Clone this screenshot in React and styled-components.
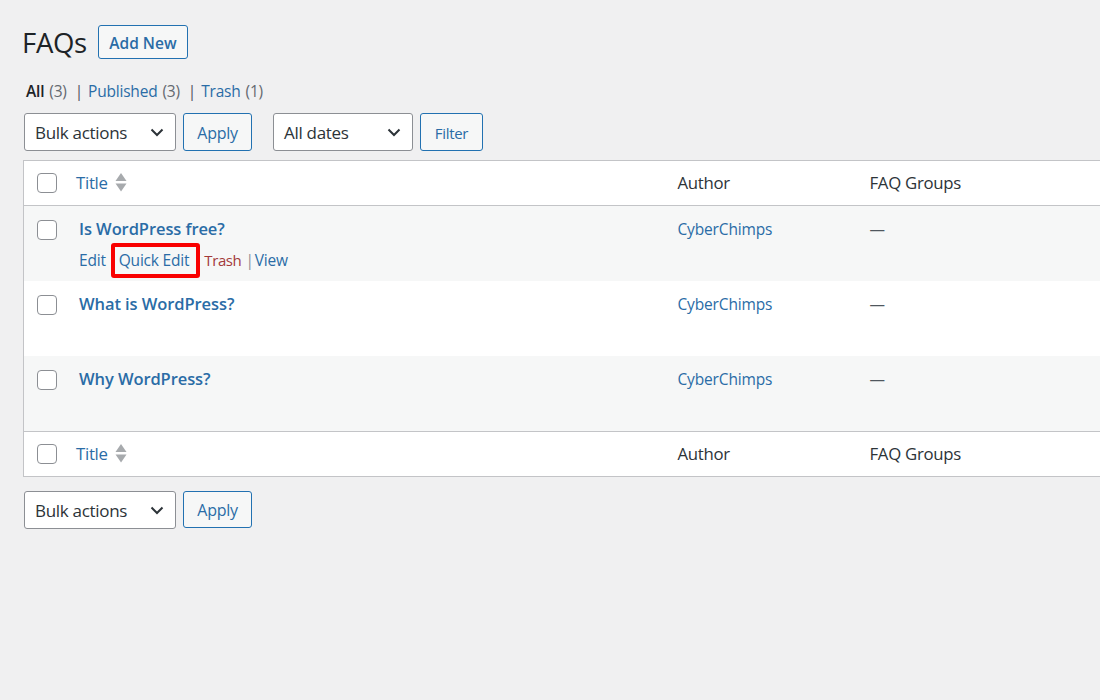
import React from "react";
import styled, { createGlobalStyle } from "styled-components";

const Global = createGlobalStyle`
  html, body { margin: 0; padding: 0; background: #f0f0f1; overflow: hidden; }
  body { width: 1100px; height: 700px; font-family: "Open Sans", "Noto Sans", sans-serif; color: #1d2327; }
  * { box-sizing: border-box; }
`;
const LINK = "#2a6ca6";
const Page = styled.div`
  width: 1100px; height: 700px; padding: 25px 0 0 23px; overflow: hidden;
`;
const Heading = styled.div`
  display: flex; align-items: center; gap: 11px; height: 34px;
`;
const Title = styled.h1`
  margin: 0 0 0 -1px; font-size: 27.5px; font-weight: 400; color: #1d2327; letter-spacing: -0.3px; line-height: 34px; position: relative; top: 1px;
`;
const AddNew = styled.button`
  width: 90px; height: 34px; border: 1px solid #2271b1; border-radius: 3px; background: #f6f7f7;
  color: ${LINK}; font: 600 15.5px "Open Sans", sans-serif; padding: 2px 0 0; letter-spacing: 0;
`;
const Views = styled.div`
  display: flex; align-items: center; margin: 22px 0 0 3px; height: 20px; font-size: 15.5px; color: #646970; letter-spacing: -0.2px; white-space: pre;
`;
const Current = styled.strong`
  font-weight: 600; color: #1d2327; margin-right: 5px;
`;
const ViewLink = styled.span`
  color: ${LINK}; margin-right: 5px;
`;
const Sep = styled.span`
  margin: 0 5px 0 8px; color: #50575e;
`;
const Tablenav = styled.div`
  display: flex; gap: 7px; margin: ${p => p.$top}px 0 0 1px;
`;
const SelectBox = styled.div`
  display: flex; align-items: center; justify-content: space-between;
  width: ${p => p.$w}px; height: ${p => p.$h}px; padding: 0 11px 0 10px; margin-left: ${p => p.$ml || 0}px;
  background: #fff; border: 1px solid #8c8f94; border-radius: 3px;
  font-size: 17px; color: #2c3338; letter-spacing: -0.3px;
`;
const Chevron = styled.svg`
  width: 14px; height: 9px; flex: none;
`;
const Action = styled.button`
  width: ${p => p.$w}px; height: ${p => p.$h}px; border: 1px solid #2271b1; border-radius: 3px;
  background: #f6f7f7; color: ${LINK}; padding: ${p => p.$pt || 0}px 0 0;
  font: 400 ${p => p.$fs || 16}px "Open Sans", sans-serif; letter-spacing: -0.3px;
`;
const Table = styled.div`
  width: 1200px; margin-top: 9px; background: #fff; border: 1px solid #c3c4c7;
`;
const Row = styled.div`
  display: grid; grid-template-columns: 52px 601.5px 192px 1fr;
  height: ${p => p.$h}px; background: ${p => p.$bg || "#fff"};
  border-top: ${p => p.$line ? "1px solid #c3c4c7" : "none"};
  border-bottom: ${p => p.$lineB ? "1px solid #c3c4c7" : "none"};
`;
const CheckCell = styled.div`
  padding: ${p => p.$pt}px 0 0 13px;
`;
const Check = styled.div`
  width: 20px; height: 20px; background: #fff; border: 1px solid #8c8f94; border-radius: 4px;
`;
const HeadCell = styled.div`
  display: flex; align-items: center; gap: 7px; font-size: 16.8px; letter-spacing: -0.3px; color: #2c3338; padding-bottom: 2px;
`;
const SortLink = styled.span`
  color: ${LINK};
`;
const TitleCell = styled.div`
  padding: 11px 0 0 3px;
`;
const RowTitle = styled.div`
  color: ${LINK}; font-weight: 600; font-size: 16.5px; line-height: 24px; letter-spacing: -0.08px;
`;
const RowActions = styled.div`
  display: flex; align-items: center; height: 20px; margin-top: 9px; font-size: 15.5px; letter-spacing: -0.2px; color: #8c8f94;
`;
const Act = styled.span`
  color: ${LINK};
`;
const DangerAct = styled.span`
  color: #a33a3b; font-size: 15px; letter-spacing: -0.4px;
`;
const Highlight = styled.span`
  position: relative; color: ${LINK}; margin: 0 15px 0 13px;
  &::after {
    content: ""; position: absolute; left: -8px; right: -11px; top: -6px; bottom: -7px;
    border: 4px solid #f90000; border-radius: 3px; pointer-events: none;
  }
`;
const Pipe = styled.span`
  margin: 0 1px 0 4px;
`;
const AuthorCell = styled.div`
  padding-top: 12px; font-size: 15.5px; letter-spacing: -0.15px; color: ${LINK};
`;
const DashCell = styled.div`
  padding-top: 12px; font-size: 15.5px; color: #50575e;
`;

const Arrow = () => (
  <Chevron viewBox="0 0 14 9"><path d="M1.5 1.5 7 7l5.5-5.5" fill="none" stroke="#2c3338" strokeWidth="2" /></Chevron>
);
const Sort = () => (
  <svg width="12" height="20" viewBox="0 0 12 20"><path d="M6 1l5.5 8H.5z" fill="#a7aaad" /><path d="M.5 11.5h11L6 19.5z" fill="#a7aaad" /></svg>
);
const Bulk = () => <SelectBox $w={152} $h={38}>Bulk actions<Arrow /></SelectBox>;

const HeadRow = ({ bottom }) => (
  <Row $h={45} $line={bottom} $lineB={!bottom}>
    <CheckCell $pt={12}><Check /></CheckCell>
    <HeadCell><SortLink>Title</SortLink><Sort /></HeadCell>
    <HeadCell>Author</HeadCell>
    <HeadCell>FAQ Groups</HeadCell>
  </Row>
);
const DataRow = ({ title, bg, children }) => (
  <Row $h={75} $bg={bg}>
    <CheckCell $pt={14}><Check /></CheckCell>
    <TitleCell>
      <RowTitle>{title}</RowTitle>
      {children}
    </TitleCell>
    <AuthorCell>CyberChimps</AuthorCell>
    <DashCell>—</DashCell>
  </Row>
);

export default function App() {
  return (
    <Page>
      <Global />
      <Heading>
        <Title>FAQs</Title>
        <AddNew>Add New</AddNew>
      </Heading>
      <Views>
        <Current>All</Current>(3)<Sep>|</Sep>
        <ViewLink>Published</ViewLink>(3)<Sep>|</Sep>
        <ViewLink>Trash</ViewLink>(1)
      </Views>
      <Tablenav $top={12}>
        <Bulk />
        <Action $w={69} $h={38} $pt={2}>Apply</Action>
        <SelectBox $w={140} $h={38} $ml={14}>All dates<Arrow /></SelectBox>
        <Action $w={63} $h={38} $fs={15} $pt={2}>Filter</Action>
      </Tablenav>
      <Table>
        <HeadRow />
        <DataRow title="Is WordPress free?" bg="#f6f7f7">
          <RowActions>
            <Act>Edit</Act>
            <Highlight>Quick Edit</Highlight>
            <DangerAct>Trash</DangerAct>
            <Pipe>|</Pipe>
            <Act>View</Act>
          </RowActions>
        </DataRow>
        <DataRow title="What is WordPress?" />
        <DataRow title="Why WordPress?" bg="#f6f7f7" />
        <HeadRow bottom />
      </Table>
      <Tablenav $top={14}>
        <Bulk />
        <Action $w={69} $h={37}>Apply</Action>
      </Tablenav>
    </Page>
  );
}
